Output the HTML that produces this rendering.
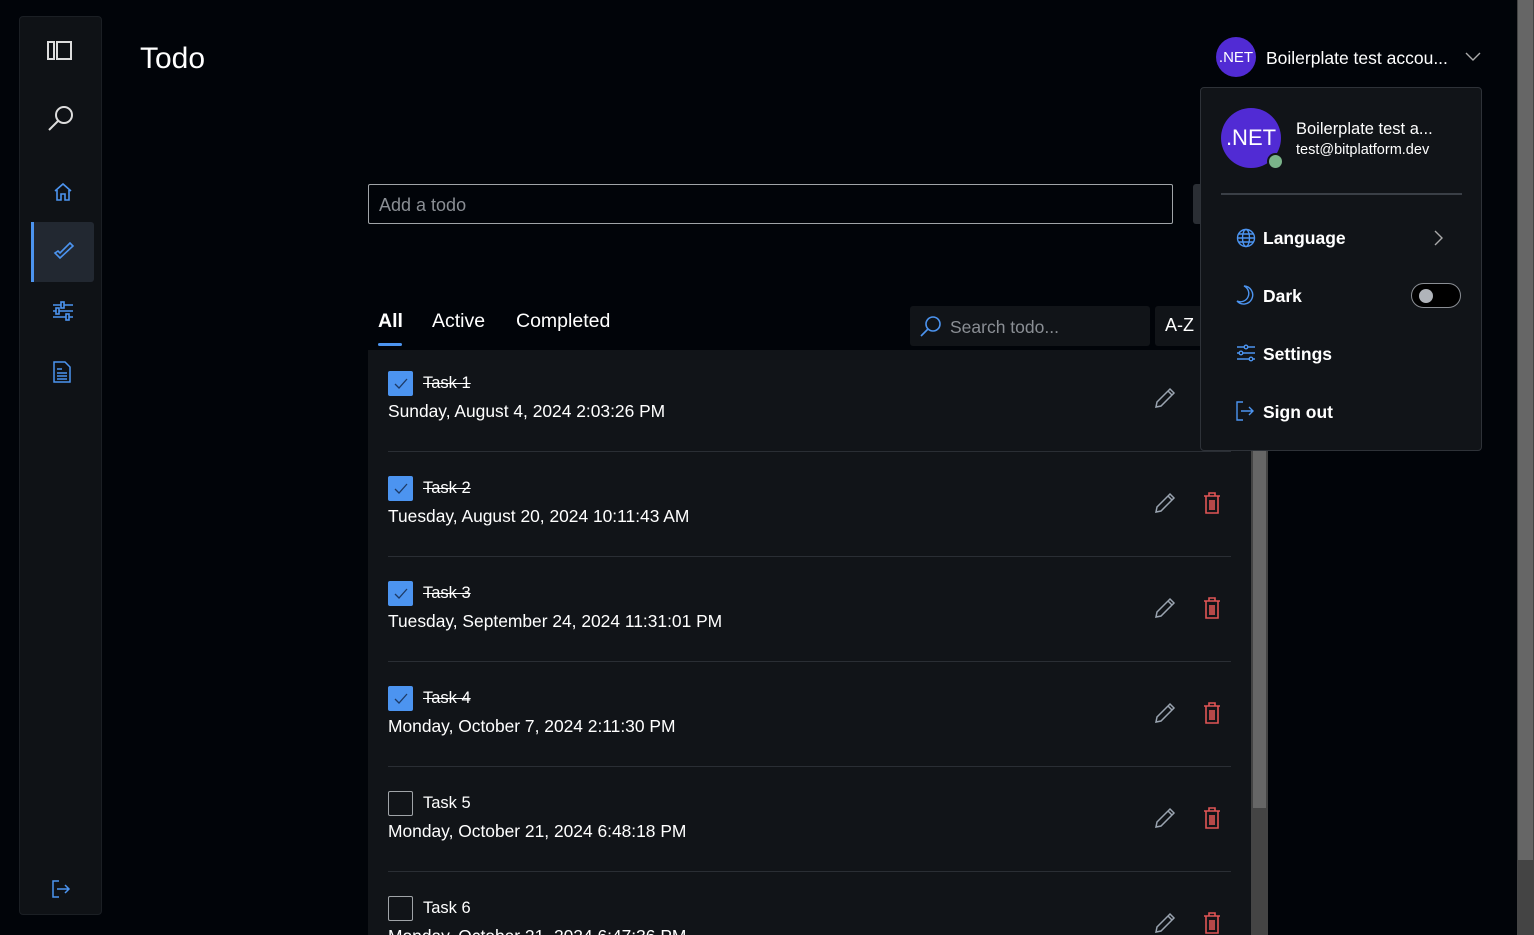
<!DOCTYPE html>
<html><head><meta charset="utf-8"><style>
*{box-sizing:border-box;margin:0;padding:0}
body{width:1534px;height:935px;overflow:hidden;background:#010409;font-family:"Segoe UI","Liberation Sans",sans-serif;color:#fff;position:relative}
.abs{position:absolute}
.side{left:19px;top:16px;width:83px;height:899px;background:#0f1216;border:1px solid #1b1f24;border-radius:4px}
.ico{position:absolute}
.row{position:absolute;left:0;width:883px;height:105px}
.sep{position:absolute;left:20px;width:843px;height:1px;background:#2a2e34;top:101px}
.cb{position:absolute;left:20px;top:21px;width:25px;height:25px;border-radius:2px}
.cb.on{background:#4c94f0}
.cb.off{border:1px solid #a0a4a8}
.t{position:absolute;left:55px;top:24px;font-size:16.5px;color:#fff}
.t.done{text-decoration:line-through}
.d{position:absolute;left:20px;top:51px;font-size:17.4px;color:#fff}
.menu{font-size:17.5px;font-weight:bold;position:absolute;left:62px}
</style></head><body>
<div class="abs side">
  <svg class="ico" style="left:27px;top:24px" width="26" height="20" viewBox="0 0 26 20" fill="none" stroke="#ddd" stroke-width="2"><rect x="1" y="1" width="6" height="17"/><rect x="10" y="1" width="14" height="17"/></svg>
  <svg class="ico" style="left:27px;top:87px" width="28" height="28" viewBox="0 0 28 28" fill="none" stroke="#ddd" stroke-width="2"><circle cx="17" cy="11" r="8"/><path d="M11 17L2 26"/></svg>
  <svg class="ico" style="left:33px;top:165px" width="20" height="20" viewBox="0 0 20 20" fill="none" stroke="#4c94f0" stroke-width="1.6"><path d="M2 9L10 2L18 9M4 8V18H8V12H12V18H16V8"/></svg>
  <div class="abs" style="left:11px;top:205px;width:63px;height:60px;background:#222831;border-radius:3px"></div>
  <div class="abs" style="left:11px;top:205px;width:3px;height:60px;background:#4c94f0"></div>
  <svg class="ico" style="left:33px;top:224px" width="22" height="20" viewBox="0 0 22 20" fill="none" stroke="#4c94f0" stroke-width="1.6"><path d="M2 12L7 17L20 5L17 2L7 12L5 10Z"/></svg>
  <svg class="ico" style="left:32px;top:284px" width="22" height="20" viewBox="0 0 22 20" fill="none" stroke="#4c94f0" stroke-width="1.6"><path d="M1 4H21M1 10H21M1 16H21"/><rect x="9" y="1" width="3" height="6" fill="#0f1216"/><rect x="4" y="7" width="3" height="6" fill="#0f1216"/><rect x="14" y="13" width="3" height="6" fill="#0f1216"/></svg>
  <svg class="ico" style="left:33px;top:344px" width="18" height="22" viewBox="0 0 18 22" fill="none" stroke="#4c94f0" stroke-width="1.5"><path d="M1 1H12L17 6V21H1Z"/><path d="M4 8H9M4 12H14M4 15H14M4 18H14"/></svg>
  <svg class="ico" style="left:31px;top:862px" width="20" height="20" viewBox="0 0 20 20" fill="none" stroke="#4c94f0" stroke-width="1.5"><path d="M8 2H2V18H8M6 10H18M14 6L18 10L14 14"/></svg>
</div>
<div class="abs" style="left:140px;top:42px;font-size:30px">Todo</div>

<div class="abs" style="left:1216px;top:37px;width:40px;height:40px;border-radius:50%;background:#512bd4;font-size:15px;display:flex;align-items:center;justify-content:center">.NET</div>
<div class="abs" style="left:1266px;top:48px;font-size:17.5px">Boilerplate test accou...</div>
<svg class="abs" style="left:1465px;top:52px" width="16" height="10" viewBox="0 0 16 10" fill="none" stroke="#aaa" stroke-width="1.4"><path d="M1 1L8 8L15 1"/></svg>

<div class="abs" style="left:368px;top:184px;width:805px;height:40px;border:1px solid #a0a4a8;border-radius:2px;font-size:18px;color:#8a8e94;padding:10px 10px">Add a todo</div>
<div class="abs" style="left:1193px;top:184px;width:20px;height:40px;background:#2a2e34;border-radius:3px"></div>

<div class="abs" style="left:378px;top:310px;font-size:19.5px;font-weight:bold">All</div>
<div class="abs" style="left:378px;top:343px;width:24px;height:3px;background:#4c94f0;border-radius:2px"></div>
<div class="abs" style="left:432px;top:310px;font-size:19.5px">Active</div>
<div class="abs" style="left:516px;top:310px;font-size:19.5px">Completed</div>
<div class="abs" style="left:910px;top:306px;width:240px;height:40px;background:#111418;border-radius:3px"></div>
<svg class="abs" style="left:920px;top:315px" width="22" height="22" viewBox="0 0 22 22" fill="none" stroke="#4c94f0" stroke-width="1.6"><circle cx="13" cy="9" r="7"/><path d="M8 14L1 21"/></svg>
<div class="abs" style="left:950px;top:317px;font-size:17.5px;color:#8a8e94">Search todo...</div>
<div class="abs" style="left:1155px;top:306px;width:50px;height:40px;background:#111418;border-radius:3px;font-size:18px;padding:9px 10px">A-Z</div>

<svg width="0" height="0" style="position:absolute"><defs>
<symbol id="pen" viewBox="0 0 22 22"><path d="M2 20L3 15L16 2L20 6L7 19Z M14 4L18 8" fill="none" stroke="#9aa4b0" stroke-width="1.5"/></symbol>
<symbol id="bin" viewBox="0 0 18 22"><path d="M1 4H17M6 4V1H12V4M3 4V21H15V4M7 8V18M9 8V18M11 8V18" fill="none" stroke="#e05555" stroke-width="1.6"/></symbol>
<symbol id="chk" viewBox="0 0 25 25"><path d="M7 13L11 17L19 8" fill="none" stroke="#1d3a66" stroke-width="1.3"/></symbol>
</defs></svg>

<div class="abs" style="left:368px;top:350px;width:883px;height:585px;background:#111418;overflow:hidden">
<div class="row" style="top:0"><div class="cb on"><svg width="25" height="25"><use href="#chk"/></svg></div><div class="t done">Task 1</div><div class="d">Sunday, August 4, 2024 2:03:26 PM</div><div class="sep"></div></div>
<div class="row" style="top:105px"><div class="cb on"><svg width="25" height="25"><use href="#chk"/></svg></div><div class="t done">Task 2</div><div class="d">Tuesday, August 20, 2024 10:11:43 AM</div><div class="sep"></div></div>
<div class="row" style="top:210px"><div class="cb on"><svg width="25" height="25"><use href="#chk"/></svg></div><div class="t done">Task 3</div><div class="d">Tuesday, September 24, 2024 11:31:01 PM</div><div class="sep"></div></div>
<div class="row" style="top:315px"><div class="cb on"><svg width="25" height="25"><use href="#chk"/></svg></div><div class="t done">Task 4</div><div class="d">Monday, October 7, 2024 2:11:30 PM</div><div class="sep"></div></div>
<div class="row" style="top:420px"><div class="cb off"></div><div class="t">Task 5</div><div class="d">Monday, October 21, 2024 6:48:18 PM</div><div class="sep"></div></div>
<div class="row" style="top:525px"><div class="cb off"></div><div class="t">Task 6</div><div class="d">Monday, October 21, 2024 6:47:36 PM</div></div>
</div>
<svg class="abs" style="left:1154px;top:387px" width="22" height="22"><use href="#pen"/></svg>
<svg class="abs" style="left:1154px;top:492px" width="22" height="22"><use href="#pen"/></svg>
<svg class="abs" style="left:1154px;top:597px" width="22" height="22"><use href="#pen"/></svg>
<svg class="abs" style="left:1154px;top:702px" width="22" height="22"><use href="#pen"/></svg>
<svg class="abs" style="left:1154px;top:807px" width="22" height="22"><use href="#pen"/></svg>
<svg class="abs" style="left:1154px;top:912px" width="22" height="22"><use href="#pen"/></svg>
<svg class="abs" style="left:1203px;top:492px" width="18" height="22"><use href="#bin"/></svg>
<svg class="abs" style="left:1203px;top:597px" width="18" height="22"><use href="#bin"/></svg>
<svg class="abs" style="left:1203px;top:702px" width="18" height="22"><use href="#bin"/></svg>
<svg class="abs" style="left:1203px;top:807px" width="18" height="22"><use href="#bin"/></svg>
<svg class="abs" style="left:1203px;top:912px" width="18" height="22"><use href="#bin"/></svg>

<div class="abs" style="left:1251px;top:350px;width:17px;height:585px;background:#444"></div>
<div class="abs" style="left:1253px;top:440px;width:13px;height:368px;background:#666"></div>
<div class="abs" style="left:1517px;top:0;width:17px;height:935px;background:#444"></div>
<div class="abs" style="left:1518px;top:0;width:15px;height:860px;background:#666"></div>

<div class="abs" style="left:1200px;top:87px;width:282px;height:364px;background:#111418;border:1px solid #2e3238;border-radius:4px">
  <div class="abs" style="left:20px;top:20px;width:60px;height:60px;border-radius:50%;background:#512bd4;font-size:22px;display:flex;align-items:center;justify-content:center">.NET</div>
  <div class="abs" style="left:66px;top:65px;width:17px;height:17px;border-radius:50%;background:#7ab38a;border:2px solid #111418"></div>
  <div class="abs" style="left:95px;top:32px;font-size:16.5px">Boilerplate test a...</div>
  <div class="abs" style="left:95px;top:54px;font-size:14.5px">test@bitplatform.dev</div>
  <div class="abs" style="left:20px;top:105px;width:241px;height:2px;background:#3a3f46"></div>
  <svg class="abs" style="left:35px;top:140px" width="20" height="20" viewBox="0 0 20 20" fill="none" stroke="#4c94f0" stroke-width="1.4"><circle cx="10" cy="10" r="8.5"/><ellipse cx="10" cy="10" rx="3.5" ry="8.5"/><path d="M1.5 10H18.5M3 6H17M3 14H17"/></svg>
  <div class="menu" style="top:140px">Language</div>
  <svg class="abs" style="left:233px;top:142px" width="10" height="16" viewBox="0 0 10 16" fill="none" stroke="#aaa" stroke-width="1.4"><path d="M1 1L8 8L1 15"/></svg>
  <svg class="abs" style="left:35px;top:197px" width="18" height="20" viewBox="0 0 18 20" fill="none" stroke="#4c94f0" stroke-width="1.4"><path d="M8 1A9 9 0 1 1 1 16A8 8 0 0 0 8 1Z"/></svg>
  <div class="menu" style="top:198px">Dark</div>
  <div class="abs" style="left:210px;top:195px;width:50px;height:25px;border:1px solid #8a8e94;border-radius:13px;background:#000"></div>
  <div class="abs" style="left:218px;top:201px;width:14px;height:14px;border-radius:50%;background:#b0b4ba"></div>
  <svg class="abs" style="left:35px;top:256px" width="20" height="18" viewBox="0 0 20 18" fill="none" stroke="#4c94f0" stroke-width="1.4"><path d="M1 3H19M1 9H19M1 15H19"/><circle cx="10" cy="3" r="1.8" fill="#111418"/><circle cx="5" cy="9" r="1.8" fill="#111418"/><circle cx="15" cy="15" r="1.8" fill="#111418"/></svg>
  <div class="menu" style="top:256px">Settings</div>
  <svg class="abs" style="left:35px;top:313px" width="18" height="20" viewBox="0 0 18 20" fill="none" stroke="#4c94f0" stroke-width="1.4"><path d="M7 1H1V19H7M5 10H17M13 6L17 10L13 14"/></svg>
  <div class="menu" style="top:314px">Sign out</div>
</div>
</body></html>
